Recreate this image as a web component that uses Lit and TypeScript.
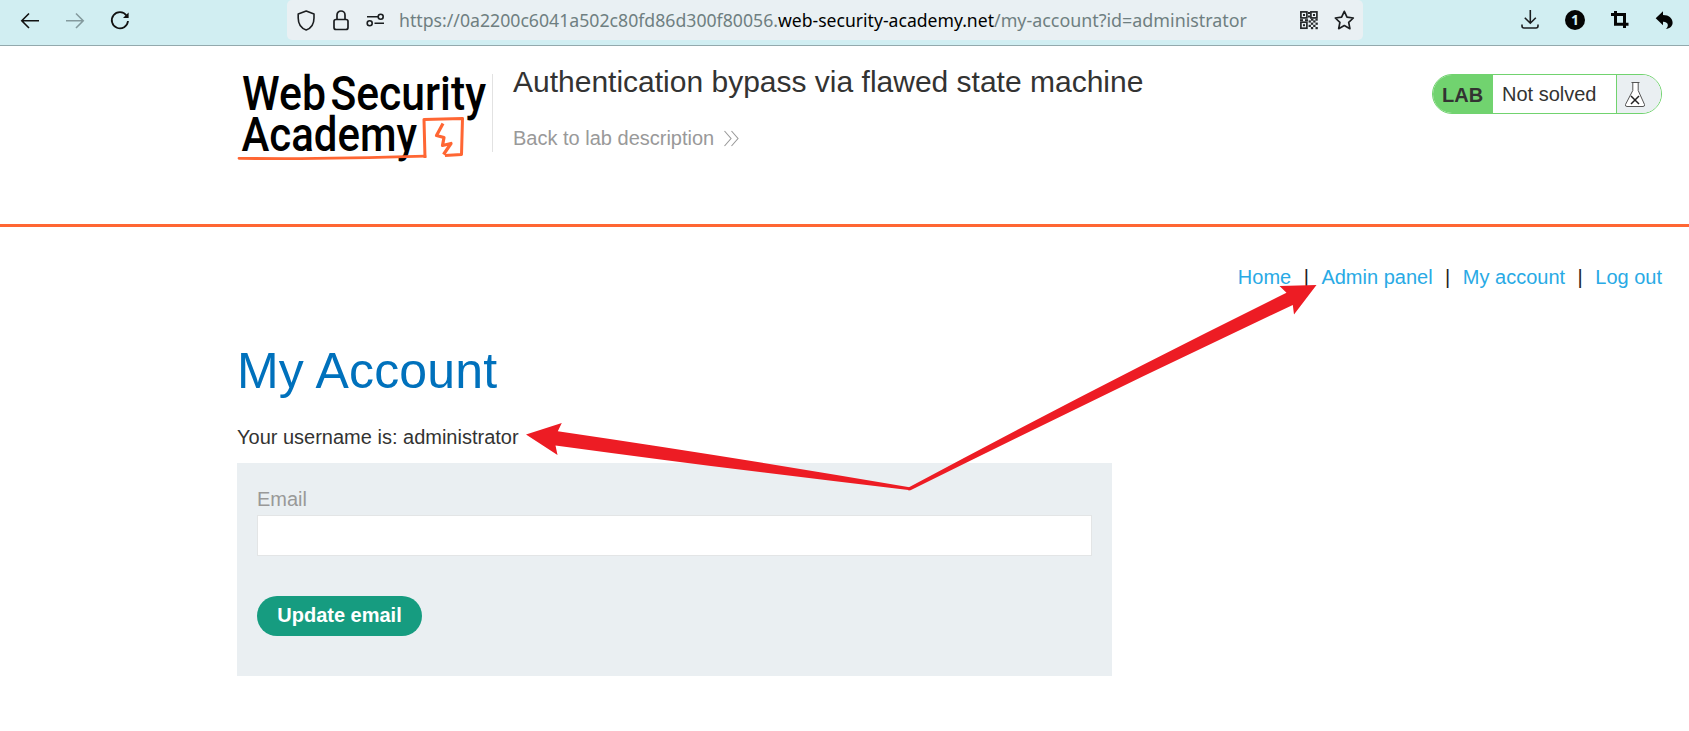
import { LitElement, html, css, svg } from "lit";
import { customElement } from "lit/decorators.js";

const QR_CELLS = ["1010", "0101", "1010", "0101"];

@customElement("browser-bar")
class BrowserBar extends LitElement {
  static styles = css`
    :host { display: block; }
    .bar { box-sizing: border-box; height: 46px; background: #d1eef2; border-bottom: 1px solid #93a9ad; display: flex; align-items: flex-start; }
    svg { display: block; flex: none; }
    .nav { display: flex; width: 267px; padding: 10px 0 0 20px; gap: 25px; box-sizing: content-box; }
    .address { box-sizing: border-box; display: flex; width: 1076px; height: 40px; background: #e9f0f3; border-radius: 5px; padding: 10px 8px 0 10px; }
    .shield { margin-right: 16px; }
    .lock { margin-right: 16px; }
    .url { margin: -10px 0 0 13px; font-family: "Noto Sans", "Open Sans", sans-serif; font-size: 18.2px; }
    .dim { fill: #6f7f81; }
    .host { fill: #000; }
    .marks { display: flex; gap: 15px; margin-left: auto; }
    .tools { display: flex; padding: 10px 15px 0 0; gap: 24px; margin-left: auto; }
    .one { font: 700 14px "Open Sans", sans-serif; fill: #d1eef2; }
  `;
  render() {
    return html`
      <div class="bar">
        <div class="nav">
          <svg width="20" height="21" fill="none" stroke="#111" stroke-width="1.6"><path d="M19 10.7H2M9 3.5L1.8 10.7L9 18" /></svg>
          <svg width="20" height="21" fill="none" stroke="#849a9e" stroke-width="1.6"><path d="M1 10.7H18M11 3.5L18.2 10.7L11 18" /></svg>
          <svg width="20" height="21" fill="none" stroke="#111" stroke-width="1.8"><path d="M16.5 5.5A8.1 8.1 0 1 0 18 11" /><path d="M18.6 2.6V8H13z" fill="#111" stroke="none" /></svg>
        </div>
        <div class="address">
          <svg class="shield" width="19" height="21" fill="none" stroke="#1b1e20" stroke-width="1.6"><path d="M9.2 1L17 4V8C17 14 14 18.3 9.2 20C4.5 18.3 1.2 14 1.2 8V4Z" stroke-linejoin="round" /></svg>
          <svg class="lock" width="18" height="21" fill="none" stroke="#1b1e20" stroke-width="1.7"><rect x="2" y="9.5" width="14" height="10" rx="2" /><path d="M5 9V5A4 4 0 0 1 13 5V9" /></svg>
          <svg width="20" height="21" fill="none" stroke="#1b1e20" stroke-width="1.6"><path d="M1 6.8H12M8.5 13.2H18" /><circle cx="14.7" cy="6.8" r="2.5" /><circle cx="3.7" cy="13.2" r="2.5" /></svg>
          <svg class="url" width="852" height="40">
            <text class="dim" x="0" y="27" textLength="379" lengthAdjust="spacingAndGlyphs">https://0a2200c6041a502c80fd86d300f80056.</text>
            <text class="host" x="379" y="27" textLength="216" lengthAdjust="spacingAndGlyphs">web-security-academy.net</text>
            <text class="dim" x="595" y="27" textLength="253" lengthAdjust="spacingAndGlyphs">/my-account?id=administrator</text>
          </svg>
          <div class="marks">
            <svg width="20" height="20" fill="none" stroke="#25282a" stroke-width="1.7">
              <rect x="1.9" y="1.9" width="6" height="6" /><rect x="11.9" y="1.9" width="6" height="6" /><rect x="1.9" y="12.2" width="6" height="6" />
              <g fill="#25282a" stroke="none">
                <rect x="4" y="4" width="2" height="2" /><rect x="14" y="4" width="2" height="2" /><rect x="4" y="14.2" width="2" height="2" />
                <rect x="9" y="2" width="2" height="2" /><rect x="9" y="5.5" width="2" height="2" />
                <rect x="1" y="9.2" width="3" height="2" /><rect x="6" y="9.2" width="3" height="2" /><rect x="12" y="8.7" width="2.4" height="2" /><rect x="16.4" y="8.7" width="2.3" height="2" />
                ${QR_CELLS.map((row, y) => row.split("").map((on, x) => on === "1"
                  ? svg`<rect x=${9.6 + x * 2.3} y=${10.4 + y * 2.2} width="2.3" height="2.2"/>` : null))}
              </g>
            </svg>
            <svg width="21" height="21" fill="none" stroke="#1b1e20" stroke-width="1.7" stroke-linejoin="round"><path d="M10.3 1.3L13 7.2L19.3 8L14.7 12.3L15.9 18.7L10.3 15.6L4.7 18.7L5.9 12.3L1.3 8L7.6 7.2Z" /></svg>
          </div>
        </div>
        <div class="tools">
          <svg width="20" height="21" fill="none" stroke="#1b1e20" stroke-width="1.6"><path d="M10.3 0V13M4.8 7.7L10.3 13.2L15.8 7.7" /><path d="M2 14.5V16A2 2 0 0 0 4 18H16A2 2 0 0 0 18 16V14.5" /></svg>
          <svg width="22" height="21"><circle cx="11" cy="10" r="10" fill="#050505" /><text class="one" x="11" y="15.2" text-anchor="middle">1</text></svg>
          <svg width="20" height="21" fill="none" stroke="#050505" stroke-width="3"><path d="M5.5 1V14.2H18.5M1 4.5H14.5V18" /></svg>
          <svg width="20" height="21" fill="#050505"><path d="M9 1.2V5C15 5 18.6 8.5 18.6 12.7C18.6 16 16 18.5 11.7 19C14.7 17 15.2 11.8 9 11.7V15.3L1.7 8.2Z" /></svg>
        </div>
      </div>`;
  }
}

@customElement("lab-header")
class LabHeader extends LitElement {
  static styles = css`
    :host { display: block; }
    .header { box-sizing: border-box; height: 181px; border-bottom: 3px solid #ff6633; padding: 0 27px 0 237px; display: flex; align-items: flex-start; background: #fff; }
    .logo { display: block; flex: none; margin-top: 10px; overflow: visible; }
    .word { font: 500 47.5px Roboto, sans-serif; fill: #000; }
    .titles { border-left: 1px solid #e2e2e2; height: 78px; margin: 28px 0 0 1px; padding-left: 20px; }
    .title { font-size: 30px; line-height: 34px; font-weight: 400; margin: -9px 0 0; white-space: nowrap; }
    .back { display: flex; color: #999; font-size: 20px; line-height: 24px; margin-top: 27px; text-decoration: none; }
    .chev { display: block; margin: 4px 0 0 9px; }
    .badge { box-sizing: border-box; display: flex; width: 230px; height: 40px; margin: 28px 0 0 auto; border: 1px solid #71d36f; border-radius: 20px; overflow: hidden; font-size: 20px; line-height: 38px; }
    .lab { box-sizing: border-box; width: 60px; background: #71d36f; padding-left: 9px; font-weight: 700; line-height: 40px; }
    .state { flex: 1; padding-left: 9px; }
    .flask { box-sizing: border-box; width: 46px; border-left: 1px solid #71d36f; background: #eaeff2; padding: 6px 0 0 7px; }
    .badge .flask { width: 45px; }
  `;
  render() {
    return html`
      <div class="header">
        <svg class="logo" width="254" height="110" viewBox="0 -14 254 110">
          <text class="word" x="5" y="40.3" textLength="84" lengthAdjust="spacingAndGlyphs">Web</text>
          <text class="word" x="93.5" y="40.3" textLength="155.5" lengthAdjust="spacingAndGlyphs">Security</text>
          <text class="word" x="4.5" y="81.4" textLength="175.5" lengthAdjust="spacingAndGlyphs">Academy</text>
          <g fill="none" stroke="#ff6633" stroke-linejoin="round">
            <path d="M188 88L187 49.5L225.5 48.5L224.5 84.5L208 85.5" stroke-width="3" />
            <path d="M206 53.5L199.5 65.5L207 67.5L205.5 75.5L214 73.5L206.5 84.5" stroke-width="3.2" />
            <path d="M2 88.3Q80 89.6 188 86.2" stroke-width="2.8" stroke-linecap="round" />
          </g>
        </svg>
        <div class="titles">
          <h2 class="title">Authentication bypass via flawed state machine</h2>
          <a class="back">Back to lab description
            <svg class="chev" width="17" height="17" fill="none" stroke="#999" stroke-width="1.1"><path d="M1.5 1L8 8.5L1.5 16M8.5 1L15 8.5L8.5 16" /></svg>
          </a>
        </div>
        <div class="badge">
          <span class="lab">LAB</span>
          <span class="state">Not solved</span>
          <span class="flask">
            <svg width="24" height="28" fill="#fff" stroke="#555" stroke-width="1"><path d="M7.5 1.5H15.5M8.8 2V9.5L1.5 23.5Q1 25.5 3 25.5H19Q21 25.5 20.5 23.5L14.2 9.5V2" /><path d="M7 15L15 23M15 15L7 23" stroke="#222" stroke-width="1.5" /></svg>
          </span>
        </div>
      </div>`;
  }
}

@customElement("app-root")
class AppRoot extends LitElement {
  static styles = css`
    :host { display: block; position: relative; height: 731px; overflow: hidden; background: #fff; color: #333332; font-family: "Liberation Sans", Arial, sans-serif; font-size: 20px; }
    .links { display: flex; justify-content: flex-end; padding: 38px 27px 0 0; line-height: 24px; gap: 12.5px; }
    .links a { color: #29aae5; }
    .links span { color: #222; }
    .content { width: 875px; margin-left: 237px; }
    h1 { margin: 54px 0 0; font-size: 50px; line-height: 56px; font-weight: 400; letter-spacing: 0.2px; color: #0071bc; }
    .user { margin: 26px 0 0; line-height: 24px; }
    .panel { box-sizing: border-box; height: 213px; margin-top: 14px; background: #eaeff2; padding: 24px 20px 0; }
    label { display: block; color: #999; line-height: 24px; }
    input { display: block; box-sizing: border-box; width: 100%; height: 41px; margin: 4px 0 40px; border: 1px solid #e3e5e6; background: #fff; padding: 0 8px; }
    button { display: block; width: 165px; height: 40px; border: 0; border-radius: 20px; background: #169c80; color: #fff; font: 700 20px "Liberation Sans", Arial, sans-serif; padding: 0 0 2px; }
    .arrows { position: absolute; inset: 0; pointer-events: none; }
  `;
  render() {
    return html`
      <browser-bar></browser-bar>
      <lab-header></lab-header>
      <nav class="links">
        <a>Home</a><span>|</span><a>Admin panel</a><span>|</span><a>My account</a><span>|</span><a>Log out</a>
      </nav>
      <main class="content">
        <h1>My Account</h1>
        <p class="user">Your username is: administrator</p>
        <div class="panel">
          <label>Email</label>
          <input type="email" />
          <button>Update email</button>
        </div>
      </main>
      <svg class="arrows" width="1689" height="731" fill="#ed1c24">
        <path d="M1316.5 285L1279.5 286L1286.5 292.8Q1090 390 909 487.3L908.3 490.4L911 490Q1100 396 1292.8 305L1294 314.5Z" />
        <path d="M526 434.4L561.8 423L557.8 431.2Q740 458 909.5 487.3L910.5 490.2Q740 470.5 555.5 445.4L557.5 455Z" />
      </svg>`;
  }
}
